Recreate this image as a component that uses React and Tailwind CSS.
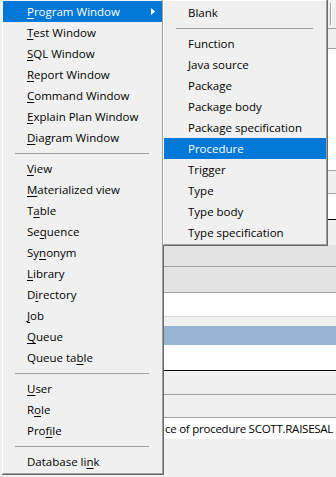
import React from "react";

const mainItems = [
  { t: "Program Window", u: 0, active: true, arrow: true },
  { t: "Test Window", u: 0 },
  { t: "SQL Window", u: 0 },
  { t: "Report Window", u: 0 },
  { t: "Command Window", u: 0 },
  { t: "Explain Plan Window", u: 0 },
  { t: "Diagram Window", u: 0 },
  { sep: true },
  { t: "View", u: 0 },
  { t: "Materialized view", u: 0 },
  { t: "Table", u: 1 },
  { t: "Sequence", u: 2 },
  { t: "Synonym", u: 2 },
  { t: "Library", u: 0 },
  { t: "Directory", u: 1 },
  { t: "Job", u: 0 },
  { t: "Queue", u: 0 },
  { t: "Queue table", u: 8 },
  { sep: true },
  { t: "User", u: 0 },
  { t: "Role", u: 1 },
  { t: "Profile", u: 3 },
  { sep: true },
  { t: "Database link", u: 11 },
];

const subItems = [
  { t: "Blank" },
  { sep: true },
  { t: "Function" },
  { t: "Java source" },
  { t: "Package" },
  { t: "Package body" },
  { t: "Package specification" },
  { t: "Procedure", active: true },
  { t: "Trigger" },
  { t: "Type" },
  { t: "Type body" },
  { t: "Type specification" },
];

function Label({ t, u }) {
  if (u === undefined) return <span>{t}</span>;
  return (
    <span>
      {t.slice(0, u)}
      <span className="underline decoration-1 underline-offset-[2px]">{t[u]}</span>
      {t.slice(u + 1)}
    </span>
  );
}

function MenuList({ items }) {
  return items.map((it, i) =>
    it.sep ? (
      <div key={i} className="flex h-[10px] items-center pl-[12px] pr-[13px]">
        <div className="h-px w-full bg-[#a0a0a0]" />
      </div>
    ) : (
      <div
        key={i}
        className={`flex h-[21px] items-center pl-[24px] whitespace-nowrap ${
          it.active ? "bg-[#0078d7] text-white" : "text-black"
        }`}
      >
        <div className="pt-px leading-none">
          <Label t={it.t} u={it.u} />
        </div>
        {it.arrow && (
          <svg className="ml-auto mr-[7px]" width="4" height="7" viewBox="0 0 4 7">
            <polygon points="0,0 4,3.5 0,7" fill="#ffffff" />
          </svg>
        )}
      </div>
    )
  );
}

function Line({ c = "bg-[#a0a0a0]" }) {
  return <div className={`h-px w-full ${c}`} />;
}

export default function App() {
  return (
    <div className="relative flex h-[477px] w-[336px] overflow-hidden bg-[#f0f0f0] font-['Open_Sans',sans-serif] text-[11.5px]">
      {/* background application window */}
      <div className="w-[164px] shrink-0" />
      <div className="flex flex-1 flex-col">
        <div className="h-[28px] bg-[#f0f0f0] pt-[3px]">
          <div className="ml-[166px] h-[22px] w-[2px] border-l border-r border-l-[#a0a0a0] border-r-white" />
        </div>
        <Line />
        <div className="h-[19px] bg-[#f0f0f0]" />
        <Line />
        <div className="h-[121px] bg-white" />
        <Line />
        <div className="h-[22px] bg-[#f0f0f0]" />
        <Line />
        <div className="h-[25px] bg-white" />
        <Line c="bg-black" />
        <div className="h-[25px] bg-[#f0f0f0]" />
        <div className="h-[21px] bg-[#e3e3e3]" />
        <Line />
        <div className="h-[25px] bg-[#e3e3e3]" />
        <Line />
        <div className="h-[23px] bg-white" />
        <Line c="bg-[#d9d9d9]" />
        <div className="h-[9px] bg-[#f0f0f0]" />
        <div className="h-[19px] bg-[#99b4d1]" />
        <div className="h-[25px] bg-white" />
        <Line c="bg-black" />
        <div className="h-[23px] bg-[#f0f0f0]" />
        <Line />
        <div className="h-[22px] bg-[#f0f0f0]" />
        <Line />
        <div className="flex h-[21px] items-center whitespace-nowrap bg-white pl-px text-black">
          <span className="pt-px leading-none tracking-[-0.25px]">ce of procedure SCOTT.RAISESAL</span>
        </div>
        <div className="flex-1 bg-[#f0f0f0]" />
      </div>

      {/* main popup menu */}
      <div className="absolute left-[2px] top-[-1px] w-[162px] border-b border-r border-[#696969]">
        <div className="border-b border-l border-r border-t border-b-[#a0a0a0] border-l-white border-r-[#a0a0a0] border-t-white bg-[#f0f0f0] py-px">
          <MenuList items={mainItems} />
        </div>
      </div>

      {/* submenu */}
      <div className="absolute left-[163px] top-0 w-[165px] border-b border-r border-[#696969]">
        <div className="border-b border-l border-r border-t border-b-[#a0a0a0] border-l-white border-r-[#a0a0a0] border-t-white bg-[#f0f0f0] py-px">
          <MenuList items={subItems} />
        </div>
      </div>
    </div>
  );
}
